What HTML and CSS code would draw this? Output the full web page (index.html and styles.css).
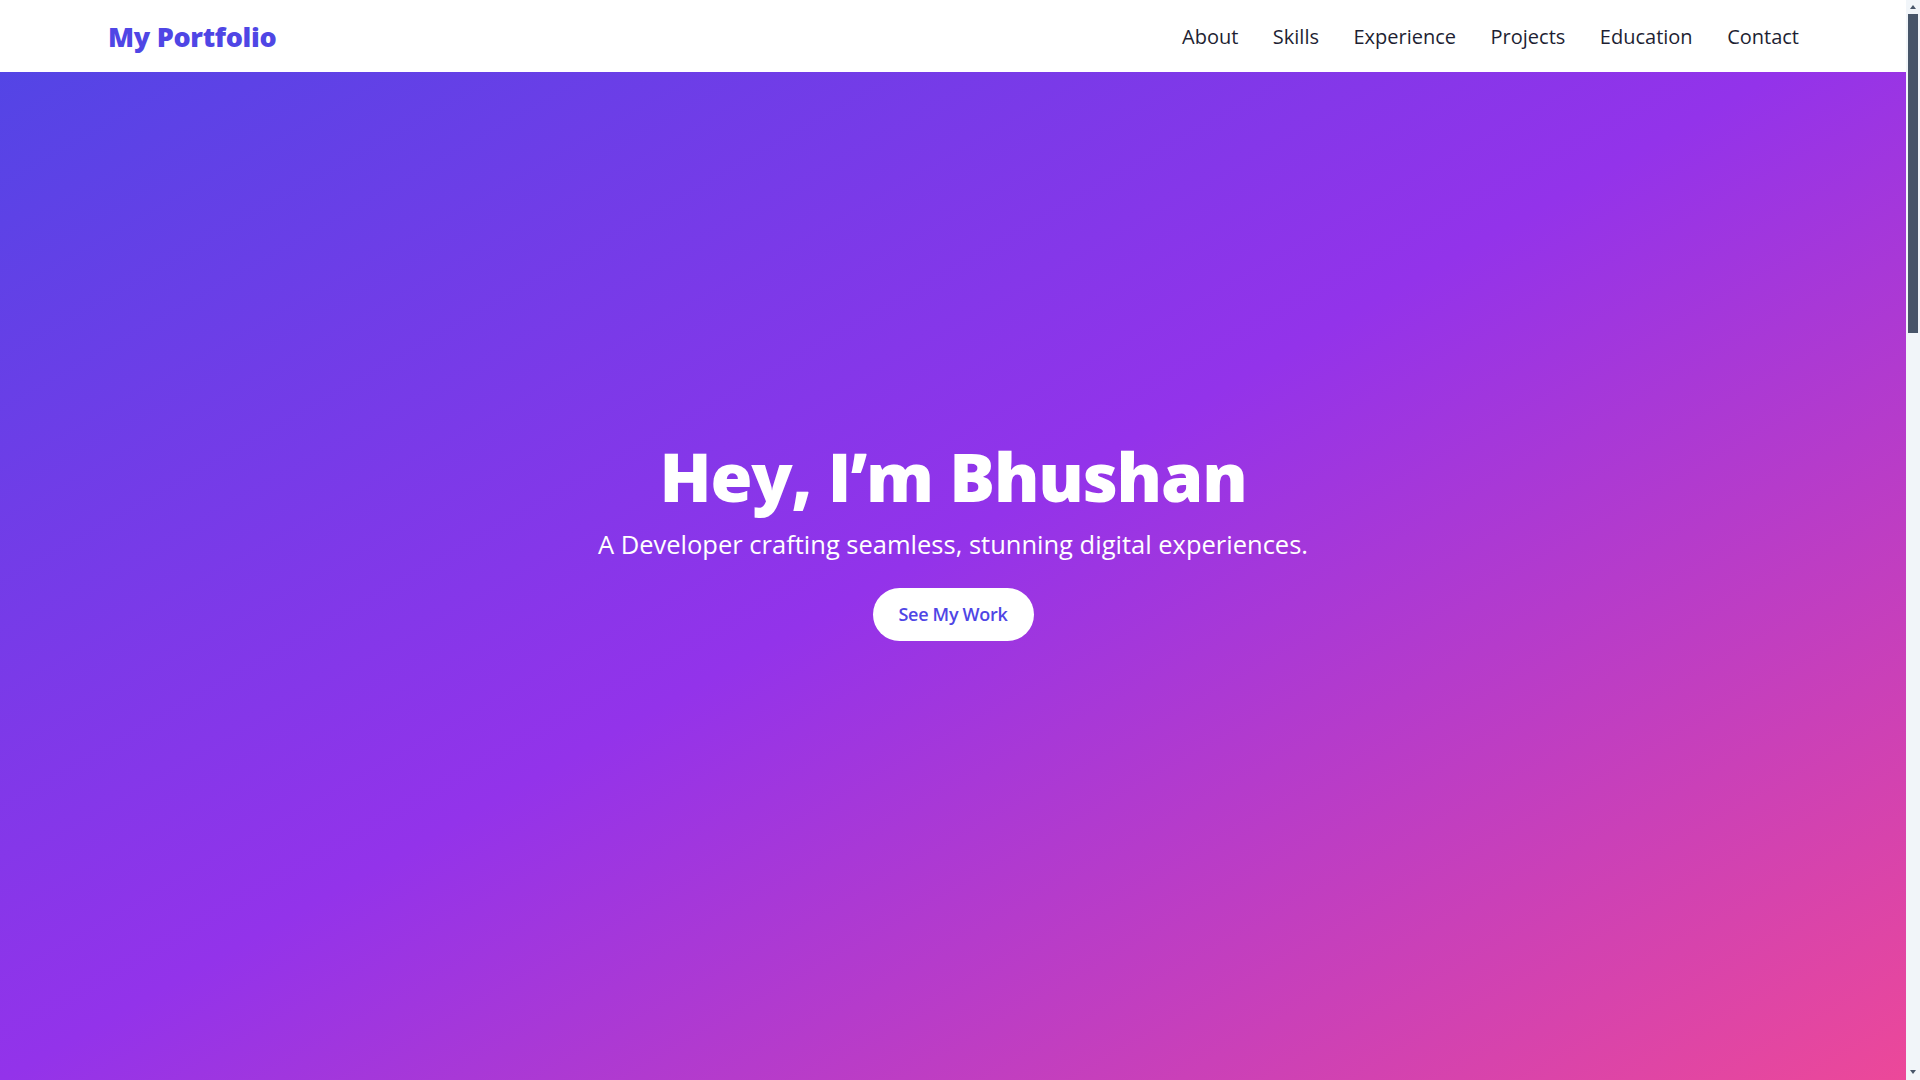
FILE: index.html
```html
<!DOCTYPE html>
<html lang="en">
<head>
<meta charset="utf-8">
<title>My Portfolio</title>
<link rel="stylesheet" href="styles.css">
</head>
<body>
<div class="page">
  <header class="navbar">
    <a class="logo" href="#">My Portfolio</a>
    <nav class="nav-links">
      <a href="#about">About</a>
      <a href="#skills">Skills</a>
      <a href="#experience">Experience</a>
      <a href="#projects">Projects</a>
      <a href="#education">Education</a>
      <a href="#contact">Contact</a>
    </nav>
  </header>
  <main>
    <section class="hero">
      <h1 class="hero-title">Hey, I’m Bhushan</h1>
      <p class="hero-sub">A Developer crafting seamless, stunning digital experiences.</p>
      <a class="hero-btn" href="#projects">See My Work</a>
    </section>
  </main>
</div>
<div class="scrollbar" aria-hidden="true">
  <span class="sb-arrow sb-up"></span>
  <span class="sb-thumb"></span>
  <span class="sb-fill"></span>
  <span class="sb-arrow sb-down"></span>
</div>
</body>
</html>
```
FILE: styles.css
```css
* { box-sizing: border-box; }
html, body { height: 100%; }
body {
  margin: 0;
  overflow: hidden;
  display: flex;
  font-family: "Open Sans", "Noto Sans", "Liberation Sans", sans-serif;
  color: #1e293b;
}
a { text-decoration: none; }

.page {
  flex: 1;
  position: relative;
  height: 100vh;
}

.navbar {
  position: absolute;
  top: 0; left: 0; right: 0;
  height: 72px;
  background: #ffffff;
  z-index: 10;
  display: flex;
  align-items: center;
  justify-content: space-between;
  padding: 0 107px 0 108px;
}
.logo {
  font-size: 27px;
  font-weight: 800;
  color: #4f46e5;
  letter-spacing: -0.3px;
  margin-top: 1px;
}
.nav-links {
  display: flex;
  gap: 34.5px;
  margin-top: 1px;
}
.nav-links a {
  font-size: 20px;
  color: #1e1f33;
  font-weight: 500;
}

.hero {
  height: 100vh;
  display: flex;
  flex-direction: column;
  align-items: center;
  justify-content: center;
  background: linear-gradient(to bottom right, #4f46e5, #9333ea 50%, #ec4899);
  color: #ffffff;
  text-align: center;
}
.hero-title {
  margin: 0;
  font-size: 68px;
  line-height: 1.1;
  font-weight: 800;
  letter-spacing: -1.2px;
}
.hero-sub {
  margin: 15px 0 0;
  font-size: 25.5px;
  line-height: 32px;
  letter-spacing: 0;
}
.hero-btn {
  margin-top: 28px;
  background: #ffffff;
  color: #4f46e5;
  font-size: 18px;
  line-height: 29px;
  font-weight: 600;
  padding: 12px 26px;
  border-radius: 9999px;
  letter-spacing: -0.3px;
}

.scrollbar {
  width: 14px;
  height: 100vh;
  flex: none;
  background: #f1f5f9;
  display: flex;
  flex-direction: column;
  align-items: center;
}
.sb-arrow {
  width: 0;
  height: 0;
  border-left: 3.5px solid transparent;
  border-right: 3.5px solid transparent;
  flex: none;
}
.sb-up {
  margin-top: 5px;
  border-bottom: 4px solid #475569;
}
.sb-thumb {
  margin-top: 5px;
  width: 10px;
  height: 319px;
  background: #475569;
  flex: none;
}
.sb-fill { flex: 1; }
.sb-down {
  margin-bottom: 6px;
  border-top: 4px solid #475569;
}
```
